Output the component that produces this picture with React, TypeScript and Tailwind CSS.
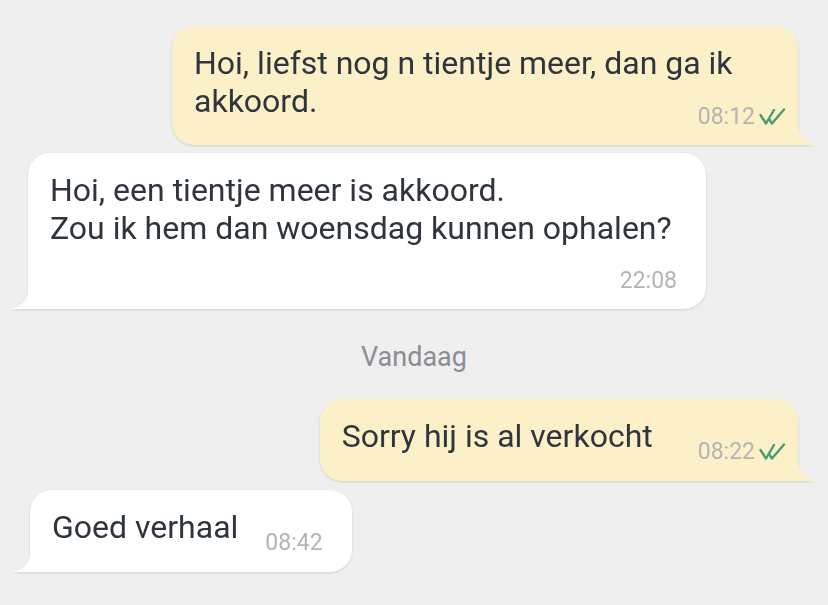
import React from "react";

const Checks = () => (
  <svg width="27" height="17" viewBox="0 0 27 17" fill="none" className="ml-[4px] mt-[5px]">
    <path d="M1.5 7 L7 15.5 L15 2" stroke="#4c9b70" strokeWidth="2.4" strokeLinecap="round" strokeLinejoin="round" />
    <path d="M10 11 L13 15.5 L25 1.5" stroke="#4c9b70" strokeWidth="2.4" strokeLinecap="round" strokeLinejoin="round" />
  </svg>
);

const TailRight = ({ color }: { color: string }) => (
  <svg width="20" height="28" viewBox="0 0 20 28" className="absolute right-[-18px] bottom-0">
    <path d="M0 0 C0.5 16 6 26 19 28 L0 28 Z" fill={color} />
  </svg>
);

const TailLeft = ({ color }: { color: string }) => (
  <svg width="22" height="28" viewBox="0 0 22 28" className="absolute left-[-20px] bottom-0">
    <path d="M22 0 C21.5 16 16 26 1 28 L22 28 Z" fill={color} />
  </svg>
);

const Time = ({ t }: { t: string }) => (
  <span className="text-[23px] leading-[28px] text-[#b4b4b4]">{t}</span>
);

export default function App() {
  return (
    <div
      className="w-[828px] h-[605px] bg-[#efefef] overflow-hidden flex flex-col pt-[26px] text-[#2f353d]"
      style={{ fontFamily: "Roboto, 'Noto Sans', sans-serif" }}
    >
      {/* Bubble 1 - outgoing */}
      <div className="flex justify-end pr-[30px]">
        <div className="relative w-[626px] bg-[#fcf0c8] rounded-[22px] rounded-br-none drop-shadow-[0_1px_1px_rgba(0,0,0,0.13)] pl-[22px] pr-[12px] pt-[18px] pb-[14px]">
          <div className="text-[32px] leading-[38px]">Hoi, liefst nog n tientje meer, dan ga ik</div>
          <div className="flex items-start justify-between">
            <div className="text-[32px] leading-[38px]">akkoord.</div>
            <div className="flex items-start mt-[21px]">
              <Time t="08:12" />
              <Checks />
            </div>
          </div>
          <TailRight color="#fcf0c8" />
        </div>
      </div>

      {/* Bubble 2 - incoming */}
      <div className="flex justify-start pl-[28px] mt-[8px]">
        <div className="relative w-[678px] bg-white rounded-[22px] rounded-bl-none drop-shadow-[0_1px_1px_rgba(0,0,0,0.13)] pl-[22px] pr-[29px] pt-[18px] pb-[14px]">
          <div className="text-[32px] leading-[38px]">Hoi, een tientje meer is akkoord.</div>
          <div className="text-[32px] leading-[38px]">Zou ik hem dan woensdag kunnen ophalen?</div>
          <div className="flex justify-end mt-[20px]">
            <Time t="22:08" />
          </div>
          <TailLeft color="#ffffff" />
        </div>
      </div>

      {/* Date divider */}
      <div className="flex justify-center mt-[30px] mb-[24px]">
        <span className="text-[27px] leading-[36px] text-[#8a8d92]">Vandaag</span>
      </div>

      {/* Bubble 3 - outgoing */}
      <div className="flex justify-end pr-[30px]">
        <div className="relative bg-[#fcf0c8] rounded-[22px] rounded-br-none drop-shadow-[0_1px_1px_rgba(0,0,0,0.13)] pl-[22px] pr-[12px] pt-[18px] pb-[15px] flex items-start">
          <div className="text-[32px] leading-[38px]">Sorry hij is al verkocht</div>
          <div className="flex items-start mt-[21px] ml-[45px]">
            <Time t="08:22" />
            <Checks />
          </div>
          <TailRight color="#fcf0c8" />
        </div>
      </div>

      {/* Bubble 4 - incoming */}
      <div className="flex justify-start pl-[30px] mt-[9px]">
        <div className="relative bg-white rounded-[22px] rounded-bl-none drop-shadow-[0_1px_1px_rgba(0,0,0,0.13)] pl-[22px] pr-[29px] pt-[18px] pb-[15px] flex items-start">
          <div className="text-[32px] leading-[38px]">Goed verhaal</div>
          <div className="flex items-start mt-[21px] ml-[27px]">
            <Time t="08:42" />
          </div>
          <TailLeft color="#ffffff" />
        </div>
      </div>
    </div>
  );
}
